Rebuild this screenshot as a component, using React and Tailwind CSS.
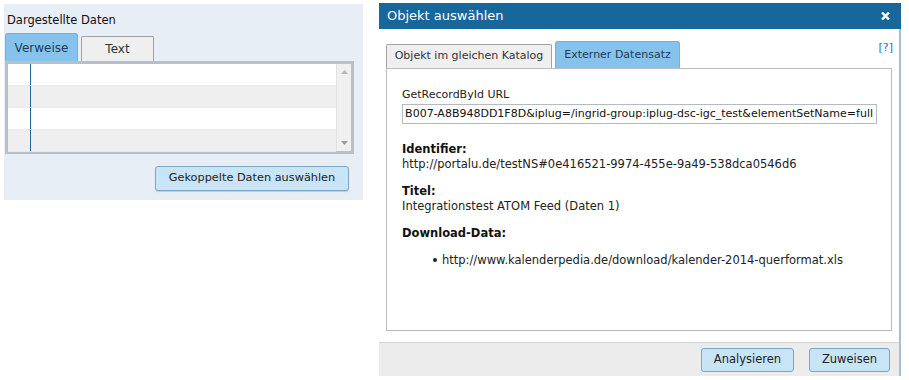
import React from "react"

const font = { fontFamily: '"DejaVu Sans", Verdana, sans-serif' }

const rows = [0, 1, 2, 3]

const App = () => {
  return (
    <div className="w-[909px] h-[380px] bg-white flex items-start pl-[4px] pt-[3px] text-[11px] text-[#222]" style={font}>
      {/* left panel */}
      <div className="mt-[1px] w-[359px] h-[196px] bg-[#e7eef5] pt-[9px]">
        <div className="pl-[3px] text-[11.5px] text-[#111] leading-[15px]">Dargestellte Daten</div>
        <div className="flex items-end mt-[5px] pl-[1px] h-[28px]">
          <div className="w-[73px] h-[28px] bg-[#86c3ec] border border-[#7aaed4] border-b-0 rounded-t-[3px] flex items-center justify-center text-[12px] text-[#1d3b57]">
            Verweise
          </div>
          <div className="ml-[3px] w-[73px] h-[25px] bg-[#efefef] border border-[#a3a3a3] border-b-0 rounded-t-[2px] flex items-center justify-center text-[12px] text-[#333]">
            Text
          </div>
        </div>
        <div className="ml-[1px] w-[349px] h-[93px] border-[3px] border-[#b9bfc9] flex">
          <div className="flex-1 flex flex-col">
            {rows.map((r) => (
              <div
                key={r}
                className={`h-[22px] flex border-b border-[#e4ecf2] ${r % 2 === 1 ? "bg-[#efefef]" : "bg-white"}`}
              >
                <div className="w-[22px]" />
                <div className="w-[1px] h-[21px] bg-[#1c6aa0]" />
              </div>
            ))}
          </div>
          <div className="w-[15px] bg-[#f0f0f0] border-l border-[#e2e2e2] flex flex-col items-center justify-between py-[6px]">
            <svg width="7" height="4" viewBox="0 0 7 4"><path d="M3.5 0L7 4H0z" fill="#b8b8b8" /></svg>
            <svg width="7" height="4" viewBox="0 0 7 4"><path d="M0 0h7L3.5 4z" fill="#9a9a9a" /></svg>
          </div>
        </div>
        <div className="flex justify-end pr-[14px] mt-[12px]">
          <button className="w-[194px] h-[25px] bg-[#c8e4f7] border border-[#7ea6c6] rounded-[3px] text-[11.3px] text-[#222] shadow-[0_1px_1px_rgba(0,0,0,0.15)]">
            Gekoppelte Daten auswählen
          </button>
        </div>
      </div>

      {/* dialog */}
      <div className="ml-[16px] w-[522px] h-[373px] flex flex-col">
        <div className="h-[26px] bg-[#18679a] flex items-center justify-between pl-[8px] pr-[11px]">
          <span className="text-[13px] text-white">Objekt auswählen</span>
          <svg width="9" height="8" viewBox="0 0 9 8">
            <path d="M1 0.5L8 7.5M8 0.5L1 7.5" stroke="#fff" strokeWidth="2.4" />
          </svg>
        </div>
        <div className="flex-1 border-r-2 border-[#a7bed2] flex flex-col">
          <div className="flex items-end justify-between pl-[7px] pr-[6px] h-[39px]">
            <div className="flex items-end">
              <div className="w-[166px] h-[24px] bg-[#efefef] border border-[#a3a3a3] border-b-0 rounded-t-[2px] flex items-center justify-center text-[11px] text-[#333]">
                Objekt im gleichen Katalog
              </div>
              <div className="ml-[3px] w-[125px] h-[27px] bg-[#86c3ec] border border-[#7aaed4] border-b-0 rounded-t-[3px] flex items-center justify-center text-[11px] text-[#1d3b57]">
                Externer Datensatz
              </div>
            </div>
            <span className="self-start mt-[11px] text-[11px] text-[#2c6fa8]">[?]</span>
          </div>
          <div className="ml-[7px] w-[506px] h-[263px] border border-[#b7bcc6] pl-[15px] pt-[19px] text-[11.5px]">
            <div className="leading-[14px] text-[11px]">GetRecordById URL</div>
            <div className="mt-[2px] w-[475px] h-[20px] border border-[#b4b9c2] px-[3px] flex items-center justify-end overflow-hidden whitespace-nowrap text-[11px] text-[#111]">
              <span className="shrink-0">B007-A8B948DD1F8D&amp;iplug=/ingrid-group:iplug-dsc-igc_test&amp;elementSetName=full</span>
            </div>
            <div className="mt-[18px] font-bold leading-[14px] text-[#111]">Identifier:</div>
            <div className="mt-[1px] leading-[14px]">http://portalu.de/testNS#0e416521-9974-455e-9a49-538dca0546d6</div>
            <div className="mt-[13px] font-bold leading-[14px] text-[#111]">Titel:</div>
            <div className="mt-[1px] leading-[14px]">Integrationstest ATOM Feed (Daten 1)</div>
            <div className="mt-[13px] font-bold leading-[14px] text-[#111]">Download-Data:</div>
            <ul className="mt-[13px] pl-[31px]">
              <li className="flex items-center leading-[14px]">
                <span className="w-[4px] h-[4px] rounded-full bg-[#222] mr-[5px]" />
                http://www.kalenderpedia.de/download/kalender-2014-querformat.xls
              </li>
            </ul>
          </div>
          <div className="mt-[11px] flex-1 bg-[#ececec] border-t border-[#d3d3d3] flex justify-end items-start pt-[5px] pr-[9px] gap-[15px]">
            <button className="w-[93px] h-[24px] bg-[#c8e4f7] border border-[#7ea6c6] rounded-[3px] text-[11.5px] text-[#222]">
              Analysieren
            </button>
            <button className="w-[81px] h-[24px] bg-[#c8e4f7] border border-[#7ea6c6] rounded-[3px] text-[11.5px] text-[#222]">
              Zuweisen
            </button>
          </div>
        </div>
      </div>
    </div>
  )
}

export default App
